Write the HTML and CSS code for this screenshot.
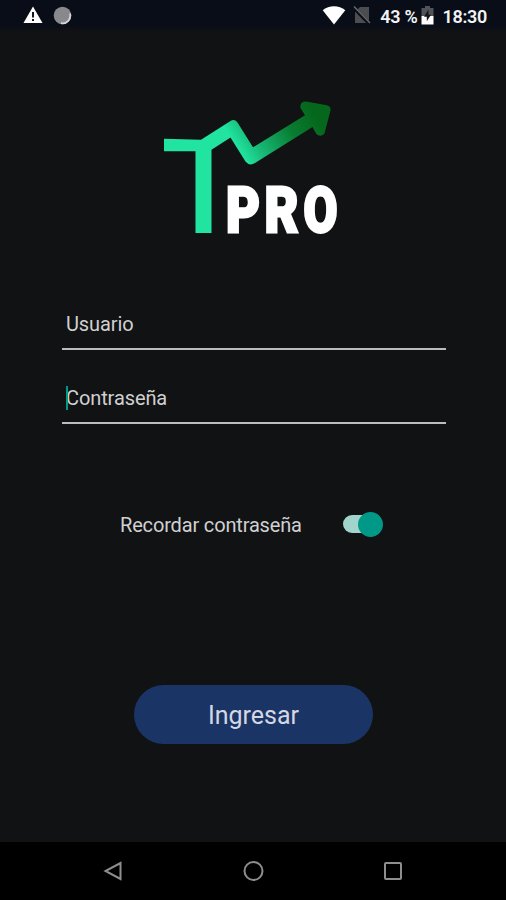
FILE: index.html
```
<!DOCTYPE html>
<html lang="es">
<head>
<meta charset="utf-8">
<title>TPRO</title>
<link rel="stylesheet" href="styles.css">
</head>
<body>
<header class="status">
  <div class="status-left">
    <svg width="20" height="18" viewBox="0 0 20 18"><path d="M10 .5 19.500 17H.5Z" fill="#fff"/><path d="M10 6v5.500M10 13v2" stroke="#151820" stroke-width="2"/></svg>
    <svg width="19" height="19" viewBox="0 0 19 19"><circle cx="9.500" cy="9.500" r="8.800" fill="#88898c"/><path d="M17 7.500A7.800 7.800 0 0 1 8 17.200" fill="none" stroke="#d4d5d7" stroke-width="1.800"/></svg>
  </div>
  <div class="status-right">
    <svg class="wifi" width="24" height="19" viewBox="0 0 24 19"><path d="M.7 4.200C7-1 17-1 23.300 4.200L12 18.500Z" fill="#fff"/></svg>
    <svg class="sim" width="18" height="20" viewBox="0 0 18 20"><path d="M7 2h9v16H2V7Z" fill="#4b4d51"/><path d="M.5 2.500 16.500 19" stroke="#0b0f17" stroke-width="3.500"/><path d="M1 1.500 17 18" stroke="#686a6e" stroke-width="1.400"/></svg>
    <span class="percent">43 %</span>
    <svg class="battery" width="13" height="19" viewBox="0 0 13 19"><path d="M4 0h5v2h3.500v8H.5V2H4Z" fill="#515357"/><path d="M.5 10h12v8.500H.5Z" fill="#fff"/><path d="M7.500 3.500 3 10.800h2.800v4.500L10 8.800H7.500Z" fill="#11151c"/></svg>
    <span class="clock">18:30</span>
  </div>
</header>
<main class="login">
  <svg class="logo" width="200" height="160" viewBox="150 90 200 160" role="img">
    <defs>
      <linearGradient id="trend" gradientUnits="userSpaceOnUse" x1="246" y1="161" x2="316" y2="116">
        <stop offset="0" stop-color="#20e4a0"/><stop offset=".22" stop-color="#18b977"/><stop offset=".65" stop-color="#087d32"/><stop offset="1" stop-color="#05671b"/>
      </linearGradient>
    </defs>
    <path d="M164 138.700 201 139.700 230.500 121Q234.500 118.500 237.500 122.500L253 147.300 305 115.300 300.500 108Q299.500 101.500 306 101.500L327 105.200Q331 106.300 330.500 110.500L324.500 133.500Q320 138 316 133.500L312.500 127 255 163Q249.500 166.500 245.500 161.500L230.500 137.500 211.500 149.700V233H195.500V151.300H164Z" fill="url(#trend)"/>
    <g class="wordmark">
      <text x="226" y="232" textLength="34" lengthAdjust="spacingAndGlyphs">P</text>
      <text x="264.500" y="232" textLength="34" lengthAdjust="spacingAndGlyphs">R</text>
      <text x="303.500" y="232" textLength="34" lengthAdjust="spacingAndGlyphs">O</text>
    </g>
  </svg>
  <form class="form">
    <div class="field">Usuario</div>
    <div class="field field-focus">Contraseña</div>
    <div class="remember"><span class="label">Recordar contraseña</span><span class="switch"><i class="knob"></i></span></div>
    <button class="submit" type="button">Ingresar</button>
  </form>
</main>
<nav class="nav">
  <svg width="20" height="22" viewBox="0 0 20 22"><path d="M17.500 3V19L2.500 11Z"/></svg>
  <svg width="22" height="22" viewBox="0 0 22 22"><circle cx="11.500" cy="11" r="9"/></svg>
  <svg width="20" height="22" viewBox="0 0 20 22"><rect x="2" y="3" width="16" height="16" rx="1"/></svg>
</nav>
</body>
</html>
```
FILE: styles.css
```
* { box-sizing: border-box; }
body {
  margin: 0;
  width: 506px;
  height: 900px;
  display: flex;
  flex-direction: column;
  background: #111214;
  color: #d0d0d1;
  font-family: Roboto, sans-serif;
  overflow: hidden;
}
svg { display: block; flex: none; }
.status {
  height: 32px;
  padding: 0 19px 2px 23px;
  display: flex;
  justify-content: space-between;
  align-items: center;
  background: linear-gradient(#090d17 80%, #111214);
  color: #f3f3f4;
  font-size: 18px;
  font-weight: 600;
}
.status-left, .status-right { display: flex; align-items: center; }
.status-left { gap: 10px; }
.wifi { margin-right: 7px; }
.sim { margin-right: 9px; }
.percent { margin: 2px 4px 0 0; letter-spacing: -.3px; }
.battery { margin-right: 8px; }
.clock { margin-top: 2px; letter-spacing: -.3px; }
.login { height: 810px; display: flex; flex-direction: column; }
.logo { margin: 58px 0 0 150px; }
.wordmark {
  fill: #fff;
  stroke: #fff;
  stroke-width: 2.8px;
  font: 900 63px Roboto, sans-serif;
}
.form { width: 384px; margin: 49px 0 0 62px; display: flex; flex-direction: column; }
.field {
  height: 51px;
  padding-left: 4px;
  border-bottom: 2px solid #bcbcbd;
  font-size: 20px;
  line-height: 50px;
  letter-spacing: -.1px;
}
.field-focus { position: relative; margin-top: 24px; height: 50px; line-height: 48px; }
.field-focus::before {
  content: "";
  position: absolute;
  left: 4px;
  top: 12px;
  width: 2px;
  height: 24px;
  background: #009783;
}
.remember {
  height: 30px;
  margin: 85px 0 0 58px;
  display: flex;
  align-items: center;
  gap: 41px;
  font-size: 20px;
  letter-spacing: -.16px;
}
.label { width: 182px; padding-top: 1px; white-space: nowrap; }
.switch {
  width: 38px;
  height: 18px;
  border-radius: 9px;
  background: #a1d5cc;
  display: flex;
  align-items: center;
  justify-content: flex-end;
}
.knob { width: 25px; height: 25px; margin-right: -2px; border-radius: 50%; background: #009887; flex: none; }
.submit {
  width: 239px;
  height: 59px;
  margin: 146px 0 0 72px;
  padding: 2px 0 0;
  border: 0;
  border-radius: 30px;
  background: #1a3565;
  color: #d3d8e3;
  font: 25px Roboto, sans-serif;
}
.nav {
  height: 58px;
  padding: 0 103px;
  display: flex;
  align-items: center;
  justify-content: space-between;
  background: #000;
}
.nav svg { fill: none; stroke: #8e8e8e; stroke-width: 2; }
```
